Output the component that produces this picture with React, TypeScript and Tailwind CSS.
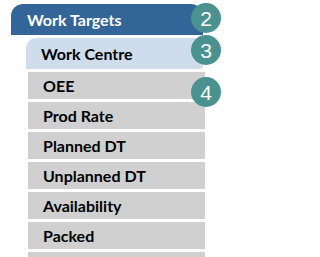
const items = ["OEE", "Prod Rate", "Planned DT", "Unplanned DT", "Availability", "Packed", ""];

function Step({ n, top }: { n: number; top: string }) {
  return (
    <div
      className={`absolute left-[191px] ${top} flex h-[30px] w-[30px] items-center justify-center rounded-full bg-[#4a9290] font-['Liberation_Sans',sans-serif] text-[21px] leading-none text-white`}
    >
      {n}
    </div>
  );
}

export default function App() {
  return (
    <div className="relative h-[257px] w-[257px] overflow-hidden bg-white pl-[11px] pt-[4px] font-['Lato',sans-serif]">
      <div className="flex h-[31px] w-[192px] items-center rounded-t-[12px] bg-[#336598] pl-[16px] text-[16px] font-bold text-white">
        Work Targets
      </div>
      <div className="mt-[3px] ml-[15px] flex h-[31px] w-[177px] items-center rounded-tl-[10px] rounded-br-[3px] bg-[#cfdcec] pl-[15px] text-[16px] font-bold text-black">
        Work Centre
      </div>
      <div className="ml-[17px] mt-[3px] flex flex-col gap-[3px]">
        {items.map((label, i) => (
          <div
            key={i}
            className="flex h-[27px] w-[177px] items-center bg-[#d0d0d0] pl-[15px] text-[16px] font-bold text-black"
          >
            {label}
          </div>
        ))}
      </div>
      <Step n={2} top="top-[3px]" />
      <Step n={3} top="top-[35px]" />
      <Step n={4} top="top-[77px]" />
    </div>
  );
}
